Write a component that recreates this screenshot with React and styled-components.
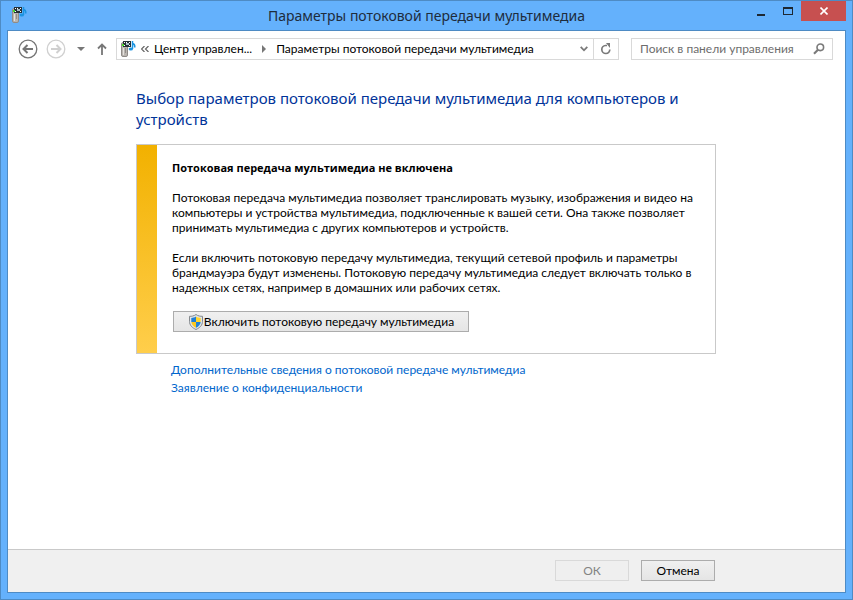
import React from "react";
import styled, { createGlobalStyle } from "styled-components";

const FONT = `Lato, "Open Sans", "Liberation Sans", sans-serif`;
const FONT_TITLE = `"Noto Sans", "Open Sans", sans-serif`;

const COLOR = {
  frame: "#64b1fc",
  frameEdge: "#4e8bc4",
  close: "#c75050",
  heading: "#003399",
  link: "#0066cc",
  line: "#c9c9c9",
  field: "#d9d9d9",
  glyph: "#7a7a7a",
};

const GlobalStyle = createGlobalStyle`
  * {
    box-sizing: border-box;
  }
  body {
    margin: 0;
    font: 12px/15px ${FONT};
    color: #000;
  }
  button,
  input {
    font: inherit;
    color: inherit;
  }
  svg {
    display: block;
    flex: none;
  }
`;

const Window = styled.div`
  display: flex;
  flex-direction: column;
  min-height: 100vh;
  padding: 0 6px 6px;
  border: 1px solid ${COLOR.frameEdge};
  background: ${COLOR.frame};
`;

const TitleBar = styled.header`
  display: grid;
  grid-template-columns: 104px 1fr 104px;
  height: 29px;
`;

const TitleIcon = styled.div`
  padding: 5px 0 0 4px;
`;

const Title = styled.h1`
  margin: 0;
  padding-top: 4px;
  font-family: ${FONT_TITLE};
  font-size: 14px;
  font-weight: 400;
  line-height: 21px;
  text-align: center;
  white-space: nowrap;
  color: #1e2c3c;
`;

const Controls = styled.div`
  display: flex;
  justify-content: flex-end;
  align-items: flex-start;
`;

const ControlButton = styled.button`
  display: flex;
  align-items: center;
  justify-content: center;
  width: ${({ $close }) => ($close ? "45px" : "27px")};
  height: 20px;
  padding: 0;
  border: 0;
  background: ${({ $close }) => ($close ? COLOR.close : "transparent")};
`;

const Client = styled.div`
  display: flex;
  flex-direction: column;
  flex: 1;
  border: 1px solid ${COLOR.frameEdge};
  background: #fff;
`;

const NavBar = styled.nav`
  display: flex;
  align-items: center;
  padding: 7px 12px 0 10px;
`;

const IconButton = styled.button`
  display: flex;
  align-items: center;
  justify-content: center;
  width: ${({ $width }) => $width}px;
  height: 20px;
  padding: 0;
  border: 0;
  background: transparent;
`;

const AddressBar = styled.div`
  display: flex;
  align-items: center;
  flex: 1;
  min-width: 0;
  height: 22px;
  padding-left: 3px;
  border: 1px solid ${COLOR.field};
`;

const Crumb = styled.a`
  padding-bottom: 2px;
  color: #000;
  text-decoration: none;
  white-space: nowrap;
`;

const CrumbGlyph = styled.span`
  display: flex;
  justify-content: center;
  width: ${({ $width }) => $width}px;
`;

const AddressTools = styled.div`
  display: flex;
  margin-left: auto;
`;

const RefreshCell = styled.div`
  border-left: 1px solid ${COLOR.field};
`;

const Search = styled.form`
  display: flex;
  align-items: center;
  width: 202px;
  height: 22px;
  margin-left: 12px;
  padding: 0 5px 0 8px;
  border: 1px solid ${COLOR.field};
`;

const SearchInput = styled.input`
  flex: 1;
  min-width: 0;
  padding: 0 0 2px;
  border: 0;
  outline: 0;
  background: transparent;
  &::placeholder {
    color: #6d6d6d;
    opacity: 1;
  }
`;

const Column = styled.div`
  width: 100%;
  max-width: 580px;
  margin: 0 auto;
`;

const Main = styled.main`
  flex: 1;
  padding: 28px 1px 0 0;
`;

const Heading = styled.h2`
  margin: 0 0 14px;
  font-family: ${FONT_TITLE};
  font-size: 15px;
  font-weight: 400;
  line-height: 21px;
  color: ${COLOR.heading};
`;

const Panel = styled.section`
  display: flex;
  border: 1px solid ${COLOR.line};
`;

const Stripe = styled.div`
  flex: none;
  width: 20px;
  background: linear-gradient(#f2b100, #ffce4b);
`;

const PanelBody = styled.div`
  padding: 15px 16px 20px 15px;
`;

const PanelTitle = styled.h3`
  margin: 0 0 15px;
  font-family: "Open Sans", "Noto Sans", sans-serif;
  font-size: 11px;
  font-weight: 700;
  line-height: 15px;
`;

const Text = styled.p`
  margin: 0 0 15px;
`;

const Action = styled.div`
  padding: 1px 0 0 1px;
`;

const PushButton = styled.button`
  display: inline-flex;
  align-items: center;
  justify-content: center;
  width: ${({ $wide }) => ($wide ? "296px" : "74px")};
  height: 21px;
  padding: 0;
  border: 1px solid #acacac;
  background: linear-gradient(#f0f0f0, #e5e5e5);
  white-space: nowrap;
  &:disabled {
    border-color: #d9d9d9;
    background: #efefef;
    color: #838383;
  }
`;

const Links = styled.div`
  display: flex;
  flex-direction: column;
  align-items: flex-start;
  padding: 7px 0 0 35px;
`;

const TextLink = styled.a`
  line-height: 18px;
  color: ${COLOR.link};
  text-decoration: none;
`;

const Footer = styled.footer`
  padding: 10px 1px 11px 0;
  border-top: 1px solid ${COLOR.line};
  background: #f0f0f0;
`;

const FooterButtons = styled(Column)`
  display: flex;
  justify-content: flex-end;
  gap: 12px;
  padding-right: 1px;
`;

const MediaIcon = () => (
  <svg width="16" height="18" viewBox="0 0 16 18" aria-hidden="true">
    <rect x="1.500" y="2.500" width="6" height="14" rx="1.500" fill="#bab5b0" stroke="#8f8b87" />
    <path d="M3.500 8v7" stroke="#e4e1dd" />
    <path d="M5.500 8v5" stroke="#918d89" />
    <path d="M3 1h8v6H3z" fill="#253036" />
    <path d="M4 2h1v1H4zM6 2h1v1H6zM9 2h1v1H9zM4 5h1v1H4zM9 5h1v1H9z" fill="#fff" />
    <path d="M6 3h3v2H6z" fill="#a8bcc7" />
    <path d="M2 4h2v2H2z" fill="#48d52c" />
    <path d="M12.500 1v8M12.500 3.500c2.500.5 2.500 2 2.300 4" fill="none" stroke="#1c94e0" strokeWidth="1.500" />
    <ellipse cx="10.800" cy="9" rx="2.200" ry="1.600" fill="#1c94e0" />
  </svg>
);

const ArrowCircle = ({ forward }) => (
  <svg
    width="20"
    height="20"
    viewBox="0 0 20 20"
    fill="none"
    stroke={forward ? "#d0d0d0" : "#757575"}
    aria-hidden="true"
  >
    <circle cx="10" cy="10" r="8.800" strokeWidth="1.300" />
    <path
      d={forward ? "M5 10h9M10.500 6l4 4-4 4" : "M15 10H6M9.500 6l-4 4 4 4"}
      strokeWidth="2"
    />
  </svg>
);

const Shield = () => (
  <svg width="16" height="16" viewBox="0 0 16 16" aria-hidden="true">
    <path
      d="M8 .5C6 2 3.500 2.400 1.500 2.300v5c0 4 2.700 6.500 6.500 8.200 3.800-1.700 6.500-4.200 6.500-8.200v-5C12.500 2.400 10 2 8 .5z"
      fill="#dfe5ea"
      stroke="#85898d"
    />
    <path d="M8 2.500c-1.500 1-3 1.300-4.700 1.400V8H8z" fill="#1f7fd3" />
    <path d="M8 2.500c1.500 1 3 1.300 4.700 1.400V8H8z" fill="#ffd52e" />
    <path d="M3.300 8H8v5.700C5.300 12.400 3.500 10.700 3.300 8z" fill="#fcc820" />
    <path d="M12.700 8H8v5.700c2.700-1.300 4.500-3 4.700-5.700z" fill="#2181d5" />
  </svg>
);

export default function App() {
  return (
    <>
      <GlobalStyle />
      <Window>
        <TitleBar>
          <TitleIcon>
            <MediaIcon />
          </TitleIcon>
          <Title>Параметры потоковой передачи мультимедиа</Title>
          <Controls>
            <ControlButton aria-label="Свернуть">
              <svg width="10" height="10" viewBox="0 0 10 10">
                <path d="M1 8h8v2H1z" fill="#1d2833" />
              </svg>
            </ControlButton>
            <ControlButton aria-label="Развернуть">
              <svg width="10" height="8" viewBox="0 0 10 8">
                <path d="M0 0h10v8H0zM1 2v5h8V2z" fill="#1d2833" fillRule="evenodd" />
              </svg>
            </ControlButton>
            <ControlButton $close aria-label="Закрыть">
              <svg width="8" height="8" viewBox="0 0 8 8">
                <path d="M.5.5l7 7m0-7l-7 7" stroke="#fff" strokeWidth="1.600" />
              </svg>
            </ControlButton>
          </Controls>
        </TitleBar>

        <Client>
          <NavBar>
            <IconButton $width={20} aria-label="Назад">
              <ArrowCircle />
            </IconButton>
            <IconButton $width={36} aria-label="Вперед">
              <ArrowCircle forward />
            </IconButton>
            <IconButton $width={14} aria-label="Последние страницы">
              <svg width="8" height="4" viewBox="0 0 8 4">
                <path d="M0 0h8L4 4z" fill="#777" />
              </svg>
            </IconButton>
            <IconButton $width={28} aria-label="Вверх">
              <svg width="10" height="12" viewBox="0 0 10 12" fill="none" stroke="#777">
                <path d="M5 12V2M1 5.500l4-4 4 4" strokeWidth="1.800" />
              </svg>
            </IconButton>
            <AddressBar>
              <MediaIcon />
              <CrumbGlyph $width={18}>
                <svg width="8" height="6" viewBox="0 0 8 6" fill="none" stroke="#666">
                  <path d="M3.500 0l-3 3 3 3M7.500 0l-3 3 3 3" strokeWidth="1.200" />
                </svg>
              </CrumbGlyph>
              <Crumb href="#control-panel">Центр управлен...</Crumb>
              <CrumbGlyph $width={24}>
                <svg width="4" height="8" viewBox="0 0 4 8">
                  <path d="M0 0l4 4-4 4z" fill="#777" />
                </svg>
              </CrumbGlyph>
              <Crumb href="#media-streaming">Параметры потоковой передачи мультимедиа</Crumb>
              <AddressTools>
                <IconButton $width={18} aria-label="Предыдущие расположения">
                  <svg width="8" height="6" viewBox="0 0 8 6" fill="none">
                    <path d="M.7.800L4 4.300 7.300.800" stroke={COLOR.glyph} strokeWidth="1.800" />
                  </svg>
                </IconButton>
                <RefreshCell>
                  <IconButton $width={24} aria-label="Обновить">
                    <svg width="12" height="12" viewBox="0 0 12 12" fill="none">
                      <path
                        d="M7 2.500H5.500A4 4 0 1 0 9.800 6.500"
                        stroke={COLOR.glyph}
                        strokeWidth="1.700"
                      />
                      <path d="M6 0h4v5z" fill={COLOR.glyph} />
                    </svg>
                  </IconButton>
                </RefreshCell>
              </AddressTools>
            </AddressBar>
            <Search>
              <SearchInput
                type="text"
                aria-label="Поиск в панели управления"
                placeholder="Поиск в панели управления"
              />
              <IconButton $width={16} type="submit" aria-label="Поиск">
                <svg width="12" height="12" viewBox="0 0 12 12" fill="none" stroke={COLOR.glyph}>
                  <circle cx="7.300" cy="4.300" r="3.300" strokeWidth="1.600" />
                  <path d="M5 6.700L1 10.700" strokeWidth="2.200" />
                </svg>
              </IconButton>
            </Search>
          </NavBar>

          <Main>
            <Column>
              <Heading>
                Выбор параметров потоковой передачи мультимедиа для компьютеров и устройств
              </Heading>
              <Panel>
                <Stripe />
                <PanelBody>
                  <PanelTitle>Потоковая передача мультимедиа не включена</PanelTitle>
                  <Text>
                    Потоковая передача мультимедиа позволяет транслировать музыку, изображения и
                    видео на компьютеры и устройства мультимедиа, подключенные к вашей сети. Она
                    также позволяет принимать мультимедиа с других компьютеров и устройств.
                  </Text>
                  <Text>
                    Если включить потоковую передачу мультимедиа, текущий сетевой профиль и
                    параметры брандмауэра будут изменены. Потоковую передачу мультимедиа следует
                    включать только в надежных сетях, например в домашних или рабочих сетях.
                  </Text>
                  <Action>
                    <PushButton $wide>
                      <Shield />
                      Включить потоковую передачу мультимедиа
                    </PushButton>
                  </Action>
                </PanelBody>
              </Panel>
              <Links>
                <TextLink href="#details">
                  Дополнительные сведения о потоковой передаче мультимедиа
                </TextLink>
                <TextLink href="#privacy">Заявление о конфиденциальности</TextLink>
              </Links>
            </Column>
          </Main>

          <Footer>
            <FooterButtons>
              <PushButton disabled>ОК</PushButton>
              <PushButton>Отмена</PushButton>
            </FooterButtons>
          </Footer>
        </Client>
      </Window>
    </>
  );
}
